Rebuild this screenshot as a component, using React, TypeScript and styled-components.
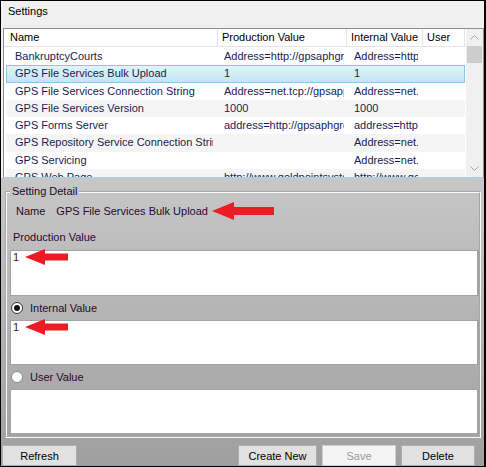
import React from 'react';
import styled, { createGlobalStyle } from 'styled-components';

interface Setting {
  name: string;
  production: string;
  internal: string;
  user: string;
}

const GlobalStyle = createGlobalStyle`
  body {
    margin: 0;
    font-family: "Liberation Sans", Arial, sans-serif;
    font-size: 11px;
  }
`;

const Window = styled.div`
  width: 486px;
  height: 467px;
  box-sizing: border-box;
  border-style: solid;
  border-color: #000;
  border-width: 1px 2px 1px 1px;
  display: flex;
  flex-direction: column;
  background: #f0f0f0;
  overflow: hidden;
`;

const TitleBar = styled.div`
  height: 27px;
  box-sizing: border-box;
  padding: 3px 0 0 7px;
  line-height: 14px;
  color: #000;
  flex-shrink: 0;
`;

const Grid = styled.div`
  height: 150px;
  margin-left: 2px;
  box-sizing: border-box;
  border: 1px solid #8f8f8f;
  border-bottom-color: #a8cfe6;
  background: #fff;
  display: flex;
  flex-shrink: 0;
`;

const ListArea = styled.div`
  flex: 1;
  display: flex;
  flex-direction: column;
  overflow: hidden;
`;

const HeaderRow = styled.div`
  display: grid;
  grid-template-columns: 214px 129px 76px 42px 1fr;
  height: 18px;
  box-sizing: border-box;
  border-bottom: 1px solid #e5e5e5;
  flex-shrink: 0;
`;

const HeaderCell = styled.div<{ $pad: number }>`
  padding-left: ${p => p.$pad}px;
  border-right: 1px solid #e5e5e5;
  line-height: 17px;
  color: #000;
  white-space: nowrap;
  overflow: hidden;
`;

const Rows = styled.div`
  padding: 1px 0 0 2px;
`;

const Row = styled.div<{ $selected: boolean; $alt: boolean }>`
  display: grid;
  grid-template-columns: 212px 129px 76px 42px;
  width: 459px;
  height: 17.3px;
  box-sizing: border-box;
  border: 1px solid ${p => (p.$selected ? '#84c9ef' : 'transparent')};
  background: ${p =>
    p.$selected
      ? 'linear-gradient(#e3f3fc, #c3e4f6)'
      : p.$alt
      ? '#f5f5f5'
      : '#fff'};
  color: #1c1c54;
`;

const Cell = styled.div<{ $pad: number; $clip: number }>`
  padding-left: ${p => p.$pad}px;
  margin-right: ${p => p.$clip}px;
  line-height: 15px;
  white-space: nowrap;
  overflow: hidden;
`;

const ScrollBar = styled.div`
  width: 17px;
  background: #f0f0f0;
  display: flex;
  flex-direction: column;
  flex-shrink: 0;
`;

const ScrollButton = styled.div`
  height: 17px;
  display: flex;
  align-items: center;
  justify-content: center;
  flex-shrink: 0;
`;

const ScrollThumb = styled.div`
  height: 17px;
  margin: 0 1px;
  background: #cdcdcd;
  flex-shrink: 0;
`;

const ScrollTrack = styled.div`
  flex: 1;
`;

const BottomPanel = styled.div`
  flex: 1;
  display: flex;
  flex-direction: column;
  padding: 7px 0 0 2px;
  background: linear-gradient(#c7c7c7, #9f9f9f);
`;

const GroupBox = styled.fieldset`
  margin: 0 3px 0 2px;
  padding: 0 0 2px 0;
  border: 2px groove #fafafa;
  min-inline-size: 0;
`;

const Legend = styled.legend`
  margin-left: 3px;
  padding: 0 2px;
  line-height: 13px;
  color: #1a0a24;
`;

const NameRow = styled.div`
  display: flex;
  align-items: center;
  height: 16px;
  margin-top: 5px;
  padding-left: 9px;
  color: #2a0a2e;
`;

const NameValue = styled.span`
  margin-left: 11px;
`;

const FieldLabel = styled.div`
  height: 16px;
  line-height: 16px;
  margin: 10px 0 5px;
  padding-left: 6px;
  color: #2a0a2e;
`;

const TextBox = styled.div<{ $height: number }>`
  height: ${p => p.$height}px;
  margin-left: 3px;
  box-sizing: border-box;
  background: #fff;
  border: 1px solid #a3a3a3;
  border-right-width: 2px;
  padding: 0 2px;
`;

const TextLine = styled.div`
  display: flex;
  align-items: center;
  height: 12px;
  color: #4a1020;
`;

const RadioBand = styled.div`
  height: 24px;
  display: flex;
  align-items: center;
  gap: 7px;
  padding-left: 4px;
  color: #2a0a2e;
`;

const Radio = styled.span<{ $checked: boolean }>`
  width: 12px;
  height: 12px;
  box-sizing: border-box;
  border-radius: 50%;
  border: 1px solid ${p => (p.$checked ? '#333' : '#8a8a8a')};
  background: #fff;
  display: flex;
  align-items: center;
  justify-content: center;

  &::after {
    content: '';
    width: 6px;
    height: 6px;
    border-radius: 50%;
    background: ${p => (p.$checked ? '#111' : 'transparent')};
  }
`;

const ButtonRow = styled.div`
  display: flex;
  gap: 5px;
  height: 21px;
  margin-top: 7px;
  padding-right: 9px;
  margin-left: -1px;
`;

const Spacer = styled.div`
  flex: 1;
`;

const Button = styled.button<{ $width: number }>`
  width: ${p => p.$width}px;
  height: 21px;
  box-sizing: border-box;
  border: 1px solid #adadad;
  background: #e1e1e1;
  color: #000;
  font: 11px "Liberation Sans", Arial, sans-serif;
  padding: 0;

  &:disabled {
    background: #f4f4f4;
    border-color: #cfcfcf;
    color: #9a9a9a;
  }
`;

const Arrow: React.FC<{ w: number; h: number; head: number; shaft: number; gap: number }> = ({
  w,
  h,
  head,
  shaft,
  gap,
}) => {
  const t = (h - shaft) / 2;
  const b = (h + shaft) / 2;
  return (
    <svg width={w} height={h} style={{ marginLeft: gap, flexShrink: 0 }} viewBox={`0 0 ${w} ${h}`}>
      <polygon
        fill="#ed1c24"
        points={`0,${h / 2} ${head},0 ${head},${t} ${w},${t} ${w},${b} ${head},${b} ${head},${h}`}
      />
    </svg>
  );
};

const Chevron: React.FC<{ up?: boolean }> = ({ up }) => (
  <svg width="9" height="5" viewBox="0 0 9 5">
    <polyline
      points={up ? '0.5,4.5 4.5,0.5 8.5,4.5' : '0.5,0.5 4.5,4.5 8.5,0.5'}
      fill="none"
      stroke="#a6a6a6"
      strokeWidth="1"
    />
  </svg>
);

const settings: Setting[] = [
  { name: 'BankruptcyCourts', production: 'Address=http://gpsaphgroup.com/bk', internal: 'Address=http://gpsaphgroup', user: '' },
  { name: 'GPS File Services Bulk Upload', production: '1', internal: '1', user: '' },
  { name: 'GPS File Services Connection String', production: 'Address=net.tcp://gpsapp01', internal: 'Address=net.tcp://', user: '' },
  { name: 'GPS File Services Version', production: '1000', internal: '1000', user: '' },
  { name: 'GPS Forms Server', production: 'address=http://gpsaphgroup', internal: 'address=http://', user: '' },
  { name: 'GPS Repository Service Connection String', production: '', internal: 'Address=net.tcp://', user: '' },
  { name: 'GPS Servicing', production: '', internal: 'Address=net.tcp://', user: '' },
  { name: 'GPS Web Page', production: 'http://www.goldpointsystems.com', internal: 'http://www.goldpoint', user: '' },
];

const selectedIndex = 1;

const App: React.FC = () => {
  const selected = settings[selectedIndex];

  return (
    <>
      <GlobalStyle />
      <Window>
        <TitleBar>Settings</TitleBar>

        <Grid>
          <ListArea>
            <HeaderRow>
              <HeaderCell $pad={6}>Name</HeaderCell>
              <HeaderCell $pad={4}>Production Value</HeaderCell>
              <HeaderCell $pad={4}>Internal Value</HeaderCell>
              <HeaderCell $pad={4}>User</HeaderCell>
              <div />
            </HeaderRow>
            <Rows>
              {settings.map((s, i) => (
                <Row key={s.name} $selected={i === selectedIndex} $alt={i % 2 === 1}>
                  <Cell $pad={8} $clip={6}>{s.name}</Cell>
                  <Cell $pad={5} $clip={4}>{s.production}</Cell>
                  <Cell $pad={6} $clip={6}>{s.internal}</Cell>
                  <Cell $pad={4} $clip={2}>{s.user}</Cell>
                </Row>
              ))}
            </Rows>
          </ListArea>
          <ScrollBar>
            <ScrollButton>
              <Chevron up />
            </ScrollButton>
            <ScrollThumb />
            <ScrollTrack />
            <ScrollButton>
              <Chevron />
            </ScrollButton>
          </ScrollBar>
        </Grid>

        <BottomPanel>
          <GroupBox>
            <Legend>Setting Detail</Legend>
            <NameRow>
              Name
              <NameValue>{selected.name}</NameValue>
              <Arrow w={62} h={18} head={22} shaft={8} gap={4} />
            </NameRow>

            <FieldLabel>Production Value</FieldLabel>
            <TextBox $height={46}>
              <TextLine>
                {selected.production}
                <Arrow w={43} h={16} head={20} shaft={7} gap={6} />
              </TextLine>
            </TextBox>

            <RadioBand>
              <Radio $checked />
              Internal Value
            </RadioBand>
            <TextBox $height={45}>
              <TextLine>
                {selected.internal}
                <Arrow w={43} h={16} head={20} shaft={7} gap={6} />
              </TextLine>
            </TextBox>

            <RadioBand>
              <Radio $checked={false} />
              User Value
            </RadioBand>
            <TextBox $height={45}>
              <TextLine>{selected.user}</TextLine>
            </TextBox>
          </GroupBox>

          <ButtonRow>
            <Button $width={75}>Refresh</Button>
            <Spacer />
            <Button $width={79}>Create New</Button>
            <Button $width={74} disabled>
              Save
            </Button>
            <Button $width={74}>Delete</Button>
          </ButtonRow>
        </BottomPanel>
      </Window>
    </>
  );
};

export default App;
